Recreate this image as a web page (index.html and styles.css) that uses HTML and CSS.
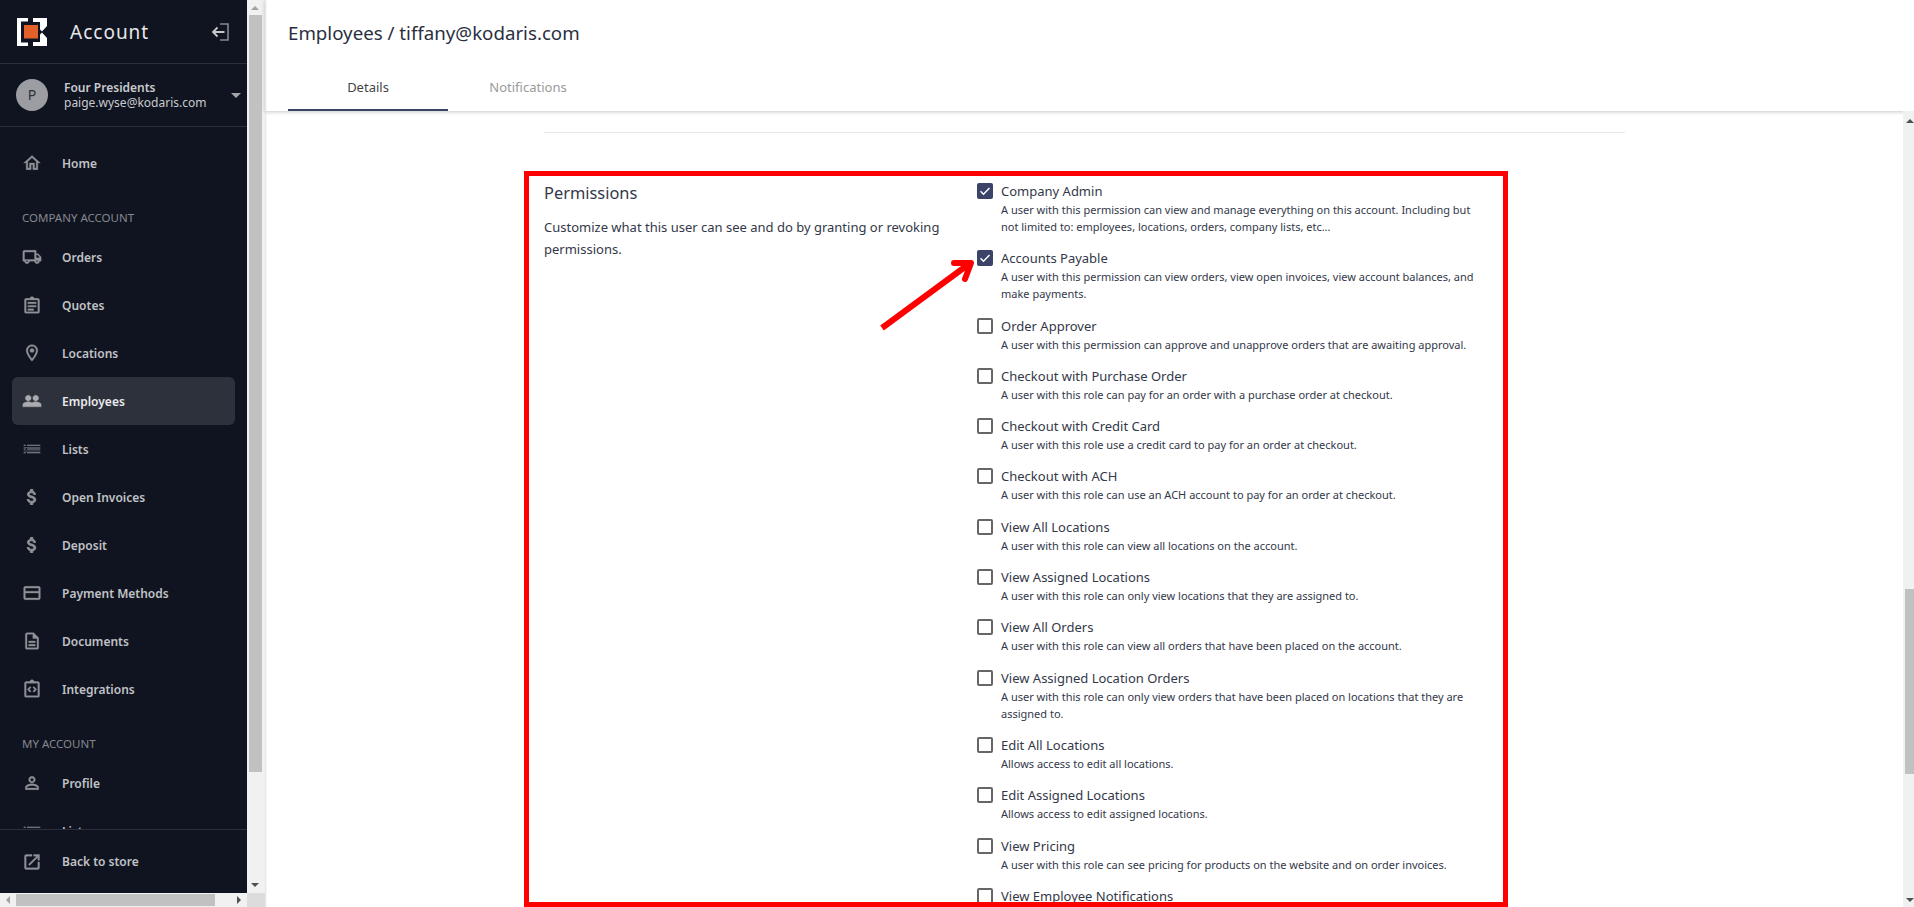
FILE: index.html
```html
<!DOCTYPE html>
<html lang="en">
<head>
    <meta charset="UTF-8">
    <title>Employees - Account</title>
    <link rel="stylesheet" href="styles.css">
</head>
<body>

    <!-- Left navigation with its own scrollbars -->
    <div class="sidebar-wrap">
        <aside class="sidebar">
            <div class="brand">
                <svg class="logo" viewBox="0 0 30 28">
                    <path d="M0 0H11V3.5H4V24.5H11V28H0Z" fill="#fff"/>
                    <rect x="7" y="7" width="14" height="13.5" fill="#e2622a"/>
                    <path d="M16 0H30V8L25 13.5L23 11.5V4H16Z" fill="#fff"/>
                    <path d="M16 28H30V20L25 14.5L23 16.5V24H16Z" fill="#fff"/>
                </svg>
                <span class="brand-name">Account</span>
                <svg class="collapse" viewBox="0 0 18 18" fill="none">
                    <path d="M9 1H17V17H9" stroke="#85878d" stroke-width="1.6"/>
                    <path d="M13.500 9H2M6.500 4.500L2 9L6.500 13.500" stroke="#c6c8cc" stroke-width="1.8"/>
                </svg>
            </div>

            <div class="user">
                <div class="avatar">P</div>
                <div class="user-text">
                    <div class="user-company">Four Presidents</div>
                    <div class="user-email">paige.wyse@kodaris.com</div>
                </div>
                <div class="caret"></div>
            </div>

            <nav class="nav">
                <a class="nav-item first">
                    <svg viewBox="0 0 24 24"><path d="M12 5.690l5 4.500V18h-2v-6H9v6H7v-7.810l5-4.500M12 3L2 12h3v8h6v-6h2v6h6v-8h3L12 3z"/></svg>
                    Home
                </a>
                <div class="nav-heading">COMPANY ACCOUNT</div>
                <a class="nav-item">
                    <svg viewBox="0 0 24 24"><path d="M19.500 8H17V4H3c-1.100 0-2 .9-2 2v11h2c0 1.660 1.340 3 3 3s3-1.340 3-3h6c0 1.660 1.340 3 3 3s3-1.340 3-3h2v-5l-3.500-4zM3 15V6h12v9H3zm3 3c-.55 0-1-.45-1-1s.45-1 1-1 1 .45 1 1-.45 1-1 1zm12 0c-.55 0-1-.45-1-1s.45-1 1-1 1 .45 1 1-.45 1-1 1zm-1-5V9.500h2l2 2.500v1h-4z"/></svg>
                    Orders
                </a>
                <a class="nav-item">
                    <svg viewBox="0 0 24 24"><path d="M19 4h-4.180C14.400 2.840 13.300 2 12 2s-2.400.84-2.820 2H5c-1.100 0-2 .9-2 2v14c0 1.100.9 2 2 2h14c1.100 0 2-.9 2-2V6c0-1.100-.9-2-2-2zm0 16H5V6h14v14zM7 8.500h10v2H7zm0 4h10v2H7zm0 4h7v2H7z"/></svg>
                    Quotes
                </a>
                <a class="nav-item">
                    <svg viewBox="0 0 24 24"><path d="M12 2C8.130 2 5 5.130 5 9c0 5.250 7 13 7 13s7-7.750 7-13c0-3.870-3.130-7-7-7zm0 17c-2.100-2.700-5-7-5-10a5 5 0 0 1 10 0c0 3-2.900 7.300-5 10z"/><circle cx="12" cy="9" r="2.500"/></svg>
                    Locations
                </a>
                <a class="nav-item active">
                    <svg viewBox="0 0 24 24"><path d="M16.500 13c-1.200 0-3.070.34-4.500 1-1.430-.67-3.300-1-4.500-1C5.330 13 1 14.080 1 16.250V19h22v-2.750c0-2.170-4.330-3.250-6.500-3.250zM7.500 12c1.930 0 3.500-1.570 3.500-3.500S9.430 5 7.500 5 4 6.570 4 8.500 5.570 12 7.500 12zm9 0c1.930 0 3.500-1.570 3.500-3.500S18.430 5 16.500 5 13 6.570 13 8.500s1.570 3.500 3.500 3.500z"/></svg>
                    Employees
                </a>
                <a class="nav-item">
                    <svg class="thin" viewBox="0 0 24 24"><path d="M2 7h2.500v1.200H2zM6 7h16v1.200H6zM2 9.500h20v.8H2zM2 11.500h2.500v1.200H2zM6 11.500h16v1.200H6zM2 14h20v.8H2zM2 16h2.500v1.200H2zM6 16h16v1.200H6z"/></svg>
                    Lists
                </a>
                <a class="nav-item">
                    <svg class="bold" viewBox="0 0 24 24"><path d="M11.800 10.900c-2.270-.59-3-1.200-3-2.150 0-1.090 1.010-1.850 2.700-1.850 1.780 0 2.440.85 2.500 2.100h2.210c-.07-1.720-1.120-3.300-3.210-3.810V3h-3v2.160c-1.940.42-3.500 1.680-3.500 3.610 0 2.310 1.910 3.460 4.700 4.130 2.500.6 3 1.480 3 2.410 0 .69-.49 1.790-2.700 1.790-2.060 0-2.870-.92-2.980-2.100h-2.200c.12 2.190 1.760 3.420 3.680 3.830V21h3v-2.150c1.950-.37 3.500-1.500 3.500-3.550 0-2.840-2.430-3.810-4.700-4.400z"/></svg>
                    Open Invoices
                </a>
                <a class="nav-item">
                    <svg class="bold" viewBox="0 0 24 24"><path d="M11.800 10.900c-2.270-.59-3-1.200-3-2.150 0-1.090 1.010-1.850 2.700-1.850 1.780 0 2.440.85 2.500 2.100h2.210c-.07-1.720-1.120-3.300-3.210-3.810V3h-3v2.160c-1.940.42-3.500 1.680-3.500 3.610 0 2.310 1.910 3.460 4.700 4.130 2.500.6 3 1.480 3 2.410 0 .69-.49 1.790-2.700 1.790-2.060 0-2.870-.92-2.980-2.100h-2.200c.12 2.190 1.760 3.420 3.680 3.830V21h3v-2.150c1.950-.37 3.500-1.500 3.500-3.550 0-2.840-2.430-3.810-4.700-4.400z"/></svg>
                    Deposit
                </a>
                <a class="nav-item">
                    <svg viewBox="0 0 24 24"><path d="M20 4H4c-1.110 0-2 .89-2 2v12c0 1.110.89 2 2 2h16c1.110 0 2-.89 2-2V6c0-1.110-.89-2-2-2zm0 14H4v-6h16v6zm0-8H4V6h16v4z"/></svg>
                    Payment Methods
                </a>
                <a class="nav-item">
                    <svg viewBox="0 0 24 24"><path d="M8 16h8v2H8zm0-4h8v2H8zm6-10H6c-1.100 0-2 .9-2 2v16c0 1.100.89 2 1.990 2H18c1.100 0 2-.9 2-2V8l-6-6zm4 18H6V4h7v5h5v11z"/></svg>
                    Documents
                </a>
                <a class="nav-item">
                    <svg viewBox="0 0 24 24"><path d="M19 3h-4.180C14.400 1.840 13.300 1 12 1s-2.400.84-2.820 2H5c-1.100 0-2 .9-2 2v15c0 1.100.9 2 2 2h14c1.100 0 2-.9 2-2V5c0-1.100-.9-2-2-2zm0 17H5V5h14v15z"/><path d="M10.500 9.500L7.500 12.500L10.500 15.500M13.500 9.500L16.500 12.500L13.500 15.500" fill="none" stroke="#8f9197" stroke-width="2"/></svg>
                    Integrations
                </a>
                <div class="nav-heading second">MY ACCOUNT</div>
                <a class="nav-item">
                    <svg viewBox="0 0 24 24"><path d="M12 5.900a2.100 2.100 0 1 1 0 4.200 2.100 2.100 0 0 1 0-4.200m0 9c2.970 0 6.100 1.460 6.100 2.100v1.100H5.900V17c0-.64 3.130-2.100 6.100-2.100M12 4C9.790 4 8 5.790 8 8s1.790 4 4 4 4-1.790 4-4-1.790-4-4-4zm0 9c-2.670 0-8 1.340-8 4v3h16v-3c0-2.660-5.330-4-8-4z"/></svg>
                    Profile
                </a>
                <a class="nav-item">
                    <svg class="thin" viewBox="0 0 24 24"><path d="M2 7h2.500v1.200H2zM6 7h16v1.200H6zM2 9.500h20v.8H2zM2 11.500h2.500v1.200H2zM6 11.500h16v1.200H6zM2 14h20v.8H2zM2 16h2.500v1.200H2zM6 16h16v1.200H6z"/></svg>
                    Lists
                </a>
            </nav>

            <div class="sidebar-foot">
                <a class="nav-item">
                    <svg viewBox="0 0 24 24"><path d="M19 19H5V5h7V3H5c-1.110 0-2 .9-2 2v14c0 1.100.89 2 2 2h14c1.100 0 2-.9 2-2v-7h-2v7zM14 3v2h3.590l-9.830 9.830 1.410 1.410L19 6.410V10h2V3h-7z"/></svg>
                    Back to store
                </a>
            </div>
        </aside>

        <div class="side-vscroll">
            <div class="arrow-up"></div>
            <div class="side-vthumb"></div>
            <div class="arrow-down"></div>
        </div>
        <div class="side-hscroll">
            <div class="arrow-left"></div>
            <div class="side-hthumb"></div>
            <div class="arrow-right"></div>
        </div>
        <div class="scroll-corner"></div>
    </div>

    <main class="main">
        <header class="topbar">
            <h1 class="page-title">Employees / tiffany@kodaris.com</h1>
            <div class="tabs">
                <div class="tab active">Details</div>
                <div class="tab">Notifications</div>
            </div>
        </header>

        <div class="content-row">
            <div class="content">
                <div class="divider"></div>

                <!-- The red box is part of the screenshot annotation -->
                <section class="permissions">
                    <div class="perm-intro">
                        <h2>Permissions</h2>
                        <p>Customize what this user can see and do by granting or revoking permissions.</p>
                    </div>
                    <div class="perm-list">
                        <div class="perm">
                            <span class="box checked"><svg viewBox="0 0 16 16"><path d="M3.500 8.300L6.500 11.200L12.500 5" fill="none" stroke="#fff" stroke-width="1.5"/></svg></span>
                            <div class="perm-text">
                                <div class="perm-name">Company Admin</div>
                                <div class="perm-desc">A user with this permission can view and manage everything on this account. Including but not limited to: employees, locations, orders, company lists, etc...</div>
                            </div>
                        </div>
                        <div class="perm">
                            <span class="box checked"><svg viewBox="0 0 16 16"><path d="M3.500 8.300L6.500 11.200L12.500 5" fill="none" stroke="#fff" stroke-width="1.5"/></svg></span>
                            <div class="perm-text">
                                <div class="perm-name">Accounts Payable</div>
                                <div class="perm-desc">A user with this permission can view orders, view open invoices, view account balances, and make payments.</div>
                            </div>
                        </div>
                        <div class="perm">
                            <span class="box"></span>
                            <div class="perm-text">
                                <div class="perm-name">Order Approver</div>
                                <div class="perm-desc">A user with this permission can approve and unapprove orders that are awaiting approval.</div>
                            </div>
                        </div>
                        <div class="perm">
                            <span class="box"></span>
                            <div class="perm-text">
                                <div class="perm-name">Checkout with Purchase Order</div>
                                <div class="perm-desc">A user with this role can pay for an order with a purchase order at checkout.</div>
                            </div>
                        </div>
                        <div class="perm">
                            <span class="box"></span>
                            <div class="perm-text">
                                <div class="perm-name">Checkout with Credit Card</div>
                                <div class="perm-desc">A user with this role use a credit card to pay for an order at checkout.</div>
                            </div>
                        </div>
                        <div class="perm">
                            <span class="box"></span>
                            <div class="perm-text">
                                <div class="perm-name">Checkout with ACH</div>
                                <div class="perm-desc">A user with this role can use an ACH account to pay for an order at checkout.</div>
                            </div>
                        </div>
                        <div class="perm">
                            <span class="box"></span>
                            <div class="perm-text">
                                <div class="perm-name">View All Locations</div>
                                <div class="perm-desc">A user with this role can view all locations on the account.</div>
                            </div>
                        </div>
                        <div class="perm">
                            <span class="box"></span>
                            <div class="perm-text">
                                <div class="perm-name">View Assigned Locations</div>
                                <div class="perm-desc">A user with this role can only view locations that they are assigned to.</div>
                            </div>
                        </div>
                        <div class="perm">
                            <span class="box"></span>
                            <div class="perm-text">
                                <div class="perm-name">View All Orders</div>
                                <div class="perm-desc">A user with this role can view all orders that have been placed on the account.</div>
                            </div>
                        </div>
                        <div class="perm">
                            <span class="box"></span>
                            <div class="perm-text">
                                <div class="perm-name">View Assigned Location Orders</div>
                                <div class="perm-desc">A user with this role can only view orders that have been placed on locations that they are assigned to.</div>
                            </div>
                        </div>
                        <div class="perm">
                            <span class="box"></span>
                            <div class="perm-text">
                                <div class="perm-name">Edit All Locations</div>
                                <div class="perm-desc">Allows access to edit all locations.</div>
                            </div>
                        </div>
                        <div class="perm">
                            <span class="box"></span>
                            <div class="perm-text">
                                <div class="perm-name">Edit Assigned Locations</div>
                                <div class="perm-desc">Allows access to edit assigned locations.</div>
                            </div>
                        </div>
                        <div class="perm">
                            <span class="box"></span>
                            <div class="perm-text">
                                <div class="perm-name">View Pricing</div>
                                <div class="perm-desc">A user with this role can see pricing for products on the website and on order invoices.</div>
                            </div>
                        </div>
                        <div class="perm">
                            <span class="box"></span>
                            <div class="perm-text">
                                <div class="perm-name">View Employee Notifications</div>
                            </div>
                        </div>
                    </div>
                    <svg class="red-arrow" viewBox="0 0 130 90" fill="none" stroke="#f00" stroke-width="6">
                        <path d="M12 78L99 14"/>
                        <path d="M84 13H101L95 29" stroke-linecap="round" stroke-linejoin="round"/>
                    </svg>
                </section>
            </div>

            <div class="main-vscroll">
                <div class="arrow-up dark"></div>
                <div class="main-vthumb"></div>
                <div class="arrow-down dark"></div>
            </div>
        </div>
    </main>

</body>
</html>
```

FILE: styles.css
```css
* {
    box-sizing: border-box;
}

html, body {
    margin: 0;
    height: 100%;
    overflow: hidden;
}

body {
    display: flex;
    font-family: "Noto Sans", Arial, sans-serif;
    background-color: #fff;
    color: #333849;
}

/* Sidebar and its scrollbars */
.sidebar-wrap {
    width: 265px;
    height: 907px;
    flex-shrink: 0;
    display: grid;
    grid-template-columns: 247px 18px;
    grid-template-rows: 893px 14px;
    background-color: #f1f1f1;
}

.sidebar {
    background-color: #0f1420;
    color: #c9cace;
    display: flex;
    flex-direction: column;
    overflow: hidden;
}

.brand {
    height: 64px;
    flex-shrink: 0;
    display: flex;
    align-items: center;
    padding: 0 18px 0 17px;
    border-bottom: 1px solid #2b2f3a;
}

.logo {
    width: 30px;
    height: 28px;
}

.brand-name {
    margin-left: 23px;
    font-size: 19px;
    letter-spacing: 1px;
    color: #e6e7e9;
}

.collapse {
    width: 18px;
    height: 18px;
    margin-left: auto;
}

.user {
    height: 63px;
    flex-shrink: 0;
    display: flex;
    align-items: center;
    padding: 0 6px 0 16px;
    border-bottom: 1px solid #2b2f3a;
}

.avatar {
    width: 32px;
    height: 32px;
    border-radius: 50%;
    background-color: #9b9da3;
    color: #2b2f3a;
    font-size: 14px;
    line-height: 32px;
    text-align: center;
}

.user-text {
    margin-left: 16px;
    font-size: 12px;
    line-height: 15px;
}

.user-company {
    font-weight: 600;
}

.caret {
    width: 0;
    height: 0;
    margin-left: auto;
    border-left: 5px solid transparent;
    border-right: 5px solid transparent;
    border-top: 5px solid #a3a5ab;
}

.nav {
    flex: 1;
    overflow: hidden;
    padding-top: 12px;
}

.nav-item {
    height: 48px;
    margin: 0 12px;
    padding-left: 10px;
    display: flex;
    align-items: center;
    border-radius: 6px;
    font-size: 12px;
    font-weight: 600;
    color: #c0c2c6;
}

.nav-item svg {
    width: 20px;
    height: 20px;
    margin-right: 20px;
    fill: #8f9197;
    stroke: #8f9197;
    stroke-width: 0.4;
    flex-shrink: 0;
}

.nav-item svg.bold {
    stroke-width: 1.2;
}

.nav-item svg.thin {
    stroke: none;
}

.nav-item.active {
    background-color: #2d313c;
    color: #e9eaec;
}

.nav-item.active svg {
    fill: #a9abb0;
    stroke: #a9abb0;
}

.nav-heading {
    padding-left: 22px;
    height: 30px;
    margin-top: 16px;
    font-size: 11.5px;
    line-height: 30px;
    color: #85878d;
}

.sidebar-foot {
    height: 64px;
    flex-shrink: 0;
    display: flex;
    align-items: center;
    border-top: 1px solid #2b2f3a;
    background-color: #0f1420;
}

.sidebar-foot .nav-item {
    width: 100%;
}

.side-vscroll, .main-vscroll {
    display: flex;
    flex-direction: column;
    align-items: center;
    background-color: #f1f1f1;
}

.side-vscroll {
    padding: 6px 2px 6px 0;
}

.side-vthumb {
    width: 13px;
    height: 757px;
    margin-top: 5px;
    background-color: #c1c1c1;
}

.side-hscroll {
    display: flex;
    align-items: center;
    padding: 0 6px;
    background-color: #f1f1f1;
}

.side-hthumb {
    width: 199px;
    height: 12px;
    margin-left: 6px;
    background-color: #c1c1c1;
}

.scroll-corner {
    background-color: #dcdcdc;
}

.arrow-up, .arrow-down, .arrow-left, .arrow-right {
    width: 0;
    height: 0;
    flex-shrink: 0;
}

.arrow-up {
    border-left: 4px solid transparent;
    border-right: 4px solid transparent;
    border-bottom: 4px solid #a3a3a3;
}

.arrow-down {
    margin-top: auto;
    border-left: 4px solid transparent;
    border-right: 4px solid transparent;
    border-top: 4px solid #505050;
}

.arrow-up.dark {
    border-bottom-color: #505050;
}

.arrow-left {
    border-top: 4px solid transparent;
    border-bottom: 4px solid transparent;
    border-right: 4px solid #a3a3a3;
}

.arrow-right {
    margin-left: auto;
    border-top: 4px solid transparent;
    border-bottom: 4px solid transparent;
    border-left: 4px solid #505050;
}

/* Main area */
.main {
    flex: 1;
    min-width: 0;
    height: 907px;
    display: flex;
    flex-direction: column;
    box-shadow: inset 3px 0 2px -2px #e0e0e0;
}

.topbar {
    height: 111px;
    flex-shrink: 0;
    padding: 21px 0 0 23px;
    box-shadow: 0 1px 4px rgba(0, 0, 0, 0.22);
}

.page-title {
    margin: 0;
    font-size: 18.7px;
    font-weight: 400;
    line-height: 24px;
    color: #2a2f40;
}

.tabs {
    display: flex;
    margin-top: 19px;
}

.tab {
    width: 160px;
    height: 47px;
    padding-top: 14px;
    text-align: center;
    font-size: 13px;
    line-height: 18px;
    color: #9a9a9a;
}

.tab.active {
    color: #444;
    border-bottom: 2px solid #3b4468;
}

.content-row {
    flex: 1;
    min-height: 0;
    display: flex;
}

.content {
    flex: 1;
    min-width: 0;
    overflow: hidden;
    padding: 21px 0 0 279px;
}

.divider {
    width: 1081px;
    height: 1px;
    background-color: #e8e8e8;
}

.permissions {
    position: relative;
    width: 984px;
    height: 736px;
    margin: 38px 0 0 -20px;
    padding: 5px 0 0 15px;
    display: flex;
    border: 5px solid #f00;
    overflow: hidden;
}

.perm-intro {
    width: 433px;
    flex-shrink: 0;
}

.perm-intro h2 {
    margin: 1px 0 0;
    font-size: 16.4px;
    font-weight: 400;
    line-height: 22px;
}

.perm-intro p {
    width: 400px;
    margin: 12px 0 0;
    font-size: 13px;
    line-height: 22px;
}

.perm-list {
    width: 510px;
    flex-shrink: 0;
}

.perm {
    display: flex;
    margin-bottom: 13.3px;
}

.box {
    width: 16px;
    height: 16px;
    margin-top: 2px;
    flex-shrink: 0;
    border: 2px solid #666;
    border-radius: 2px;
}

.box.checked {
    border: none;
    background-color: #3b4468;
}

.box svg {
    display: block;
}

.perm-text {
    margin-left: 8px;
    min-width: 0;
}

.perm-name {
    font-size: 13px;
    line-height: 20px;
}

.perm-desc {
    font-size: 11px;
    line-height: 17px;
}

/* Annotation arrow drawn on the screenshot */
.red-arrow {
    position: absolute;
    left: 341px;
    top: 74px;
    width: 130px;
    height: 90px;
}

.main-vscroll {
    width: 11px;
    flex-shrink: 0;
    padding-top: 8px;
    padding-bottom: 5px;
    align-items: flex-end;
}

.main-vthumb {
    width: 9px;
    height: 185px;
    margin-top: 466px;
    background-color: #c1c1c1;
}
```
